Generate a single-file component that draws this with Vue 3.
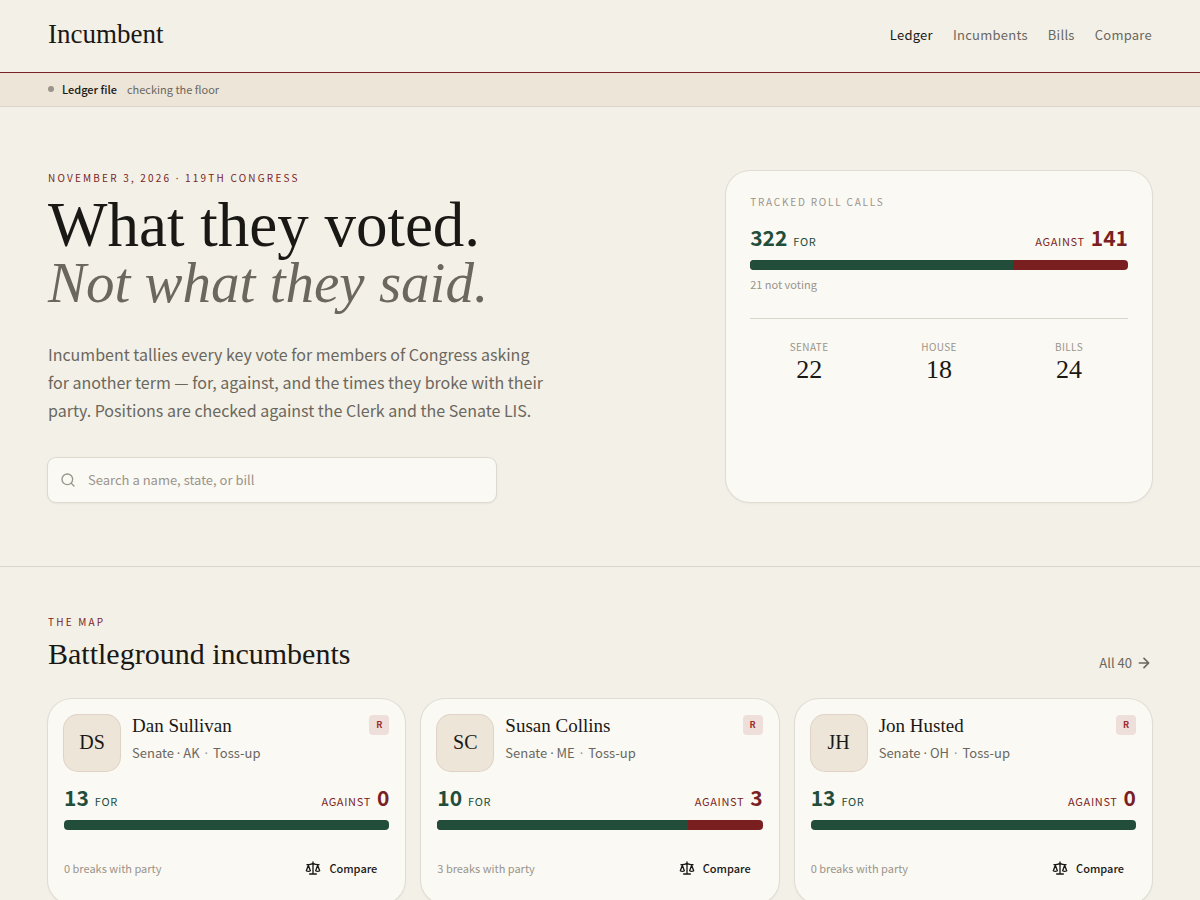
<template>
  <div class="page">
    <header class="header">
      <a class="logo" href="#">Incumbent</a>
      <nav class="nav">
        <a
          v-for="link in links"
          :key="link"
          href="#"
          :class="{ active: link === 'Ledger' }"
          >{{ link }}</a
        >
      </nav>
    </header>

    <div class="status">
      <span class="dot"></span>
      <strong>Ledger file</strong>
      <span>checking the floor</span>
    </div>

    <section class="hero">
      <div class="intro">
        <p class="eyebrow">
          November 3, 2026 <span class="sep">·</span> 119th Congress
        </p>
        <h1>What they voted.<em>Not what they said.</em></h1>
        <p class="lead">
          Incumbent tallies every key vote for members of Congress asking for
          another term — for, against, and the times they broke with their
          party. Positions are checked against the Clerk and the Senate LIS.
        </p>
        <form class="search" @submit.prevent>
          <svg viewBox="0 0 24 24" aria-hidden="true">
            <circle cx="11" cy="11" r="8" />
            <path d="m21 21-4.3-4.3" />
          </svg>
          <input
            v-model="query"
            type="search"
            aria-label="Search a name, state, or bill"
            placeholder="Search a name, state, or bill"
          />
        </form>
      </div>

      <aside class="summary">
        <h2 class="eyebrow faint">Tracked roll calls</h2>
        <div class="tally">
          <span class="for"><b>322</b> For</span>
          <span class="against">Against <b>141</b></span>
        </div>
        <div class="bar">
          <div class="fill" :style="{ width: share(322, 141) }"></div>
        </div>
        <p class="note">21 not voting</p>
        <dl class="stats">
          <div v-for="stat in stats" :key="stat.label">
            <dt>{{ stat.label }}</dt>
            <dd>{{ stat.value }}</dd>
          </div>
        </dl>
      </aside>
    </section>

    <section class="map">
      <div class="map-head">
        <div>
          <p class="eyebrow">The map</p>
          <h2 class="title">Battleground incumbents</h2>
        </div>
        <a class="all" href="#">
          All 40
          <svg viewBox="0 0 24 24" aria-hidden="true">
            <path d="M5 12h14M12 5l7 7-7 7" />
          </svg>
        </a>
      </div>

      <div class="cards">
        <article v-for="person in people" :key="person.name" class="card">
          <div class="card-head">
            <div class="avatar">{{ person.initials }}</div>
            <div class="who">
              <h3>{{ person.name }}</h3>
              <p>
                Senate <span class="sep">·</span> {{ person.state
                }}<span class="sep wide">·</span>Toss-up
              </p>
            </div>
            <span class="party">R</span>
          </div>
          <div class="tally">
            <span class="for"><b>{{ person.yes }}</b> For</span>
            <span class="against">Against <b>{{ person.no }}</b></span>
          </div>
          <div class="bar">
            <div
              class="fill"
              :style="{ width: share(person.yes, person.no) }"
            ></div>
          </div>
          <div class="card-foot">
            <span class="note">{{ person.no }} breaks with party</span>
            <button type="button">
              <svg viewBox="0 0 24 24" aria-hidden="true">
                <path d="m16 16 3-8 3 8c-.9.7-1.9 1-3 1s-2.1-.3-3-1Z" />
                <path d="m2 16 3-8 3 8c-.9.7-1.9 1-3 1s-2.1-.3-3-1Z" />
                <path d="M7 21h10M12 3v18M3 7h2c2 0 5-1 7-2 2 1 5 2 7 2h2" />
              </svg>
              Compare
            </button>
          </div>
        </article>
      </div>
    </section>
  </div>
</template>

<script setup>
import { ref } from "vue";

const query = ref("");

const links = ["Ledger", "Incumbents", "Bills", "Compare"];

const stats = [
  { label: "Senate", value: 22 },
  { label: "House", value: 18 },
  { label: "Bills", value: 24 },
];

const people = [
  { name: "Dan Sullivan", initials: "DS", state: "AK", yes: 13, no: 0 },
  { name: "Susan Collins", initials: "SC", state: "ME", yes: 10, no: 3 },
  { name: "Jon Husted", initials: "JH", state: "OH", yes: 13, no: 0 },
];

const share = (yes, no) => `${(yes / (yes + no)) * 100}%`;
</script>

<style>
body {
  margin: 0;
  background: #f3f0e7;
}
</style>

<style scoped>
.page {
  color: #1a1814;
  font-family: "Noto Sans CJK SC", sans-serif;
  font-size: 13px;
  line-height: 20px;
}
h1,
h2,
h3,
p,
dl,
dd {
  margin: 0;
  font-weight: 400;
}
a {
  color: inherit;
  text-decoration: none;
}
svg {
  fill: none;
  stroke: currentColor;
  stroke-width: 2;
  stroke-linecap: round;
  stroke-linejoin: round;
}
.logo,
h1,
.title,
h3,
.avatar,
dd {
  font-family: "Liberation Serif", serif;
}
.sep {
  font-family: "Noto Sans", sans-serif;
  line-height: 1;
}
.header {
  display: flex;
  align-items: center;
  justify-content: space-between;
  height: 72px;
  padding: 0 48px;
  border-bottom: 1px solid #7a1f24;
}
.logo {
  font-size: 27px;
  line-height: 32px;
  padding-bottom: 4px;
}
.nav {
  display: flex;
  gap: 20px;
  padding-bottom: 2px;
  color: #6b675e;
  letter-spacing: 0.02em;
}
.nav .active {
  color: #1a1814;
}
.status {
  display: flex;
  align-items: center;
  padding: 6px 48px 7px;
  background: #ece5d8;
  border-bottom: 1px solid #d9d5cb;
  color: #6b675e;
  font-size: 11px;
}
.status strong {
  margin: 0 10px 0 8px;
  color: #1a1814;
  font-weight: 500;
}
.dot {
  width: 6px;
  height: 6px;
  border-radius: 50%;
  background: #9a948a;
}
.hero {
  display: grid;
  grid-template-columns: 7fr 5fr;
  gap: 82px;
  padding: 64px 48px;
  border-bottom: 1px solid #d9d5cb;
}
.eyebrow {
  color: #7a1f24;
  font-size: 10px;
  line-height: 14px;
  letter-spacing: 0.22em;
  text-transform: uppercase;
}
.faint {
  color: #9a948a;
  letter-spacing: 0.18em;
}
h1 {
  margin-top: 12px;
  font-size: 63px;
  line-height: 57px;
}
h1 em {
  display: block;
  color: #6b675e;
  font-size: 57px;
}
.lead {
  max-width: 504px;
  margin-top: 29px;
  color: #6b675e;
  font-size: 16px;
  line-height: 28px;
}
.search {
  display: flex;
  align-items: center;
  gap: 12px;
  max-width: 448px;
  height: 44px;
  box-sizing: border-box;
  margin-top: 34px;
  padding: 0 12px;
  border-radius: 8px;
  background: #faf9f4;
  box-shadow: 0 0 0 1px #dcd9cf, 0 1px 3px rgba(26, 24, 20, 0.1);
}
.search svg {
  width: 16px;
  height: 16px;
  color: #9a948a;
}
.search input {
  flex: 1;
  padding: 0;
  border: 0;
  outline: 0;
  background: none;
  color: inherit;
  font: inherit;
}
.search input::placeholder {
  color: #9a948a;
}
.summary,
.card {
  border-radius: 24px;
  background: #faf9f4;
  box-shadow: 0 0 0 1px #dfdcd3, 0 1px 3px rgba(26, 24, 20, 0.08);
}
.summary {
  padding: 24px;
}
.tally {
  display: flex;
  justify-content: space-between;
  font-size: 11px;
  line-height: 24px;
  letter-spacing: 0.06em;
  text-transform: uppercase;
}
.tally span {
  display: flex;
  align-items: baseline;
  gap: 6px;
}
.tally b {
  font-size: 21px;
  letter-spacing: 0;
}
.summary .tally {
  margin-top: 16px;
}
.for {
  color: #234d3b;
}
.against {
  color: #7a1f24;
}
.bar {
  height: 10px;
  margin-top: 7px;
  overflow: hidden;
  border-radius: 4px;
  background: #7a1f20;
}
.fill {
  height: 100%;
  background: #234d3b;
}
.note {
  color: #9a948a;
  font-size: 11px;
}
.summary .note {
  margin-top: 4px;
}
.stats {
  display: grid;
  grid-template-columns: repeat(3, 1fr);
  gap: 12px;
  margin-top: 24px;
  padding-top: 20px;
  border-top: 1px solid #d9d5cb;
  text-align: center;
}
dt {
  color: #9a948a;
  font-size: 10px;
  line-height: 16px;
  letter-spacing: 0.04em;
  text-transform: uppercase;
}
dd {
  font-size: 26px;
  line-height: 30px;
}
.map {
  padding: 48px;
}
.map-head {
  display: flex;
  align-items: flex-end;
  justify-content: space-between;
}
.title {
  margin-top: 6px;
  font-size: 30px;
  line-height: 38px;
}
.all {
  display: flex;
  align-items: center;
  gap: 4px;
  color: #6b675e;
}
.all svg {
  width: 16px;
  height: 16px;
  stroke-width: 2.5;
}
.cards {
  display: grid;
  grid-template-columns: repeat(3, 1fr);
  gap: 16px;
  margin-top: 26px;
}
.card {
  padding: 16px;
}
.card-head {
  display: flex;
  gap: 12px;
}
.avatar {
  width: 56px;
  height: 56px;
  border-radius: 14px;
  background: #ece5d8;
  box-shadow: 0 0 0 1px #e0d2c6;
  font-size: 20px;
  line-height: 54px;
  text-align: center;
}
.who {
  flex: 1;
  color: #6b675e;
}
h3 {
  color: #1a1814;
  font-size: 19px;
  line-height: 22px;
}
.who p {
  margin-top: 6px;
}
.who .wide {
  margin: 0 5px;
  color: #9a948a;
}
.party {
  width: 20px;
  height: 20px;
  border-radius: 4px;
  background: #efdfdb;
  color: #9b2c2c;
  font-size: 9px;
  font-weight: 700;
  text-align: center;
}
.card .tally {
  margin-top: 14px;
}
.card-foot {
  display: flex;
  align-items: center;
  justify-content: space-between;
  margin-top: 18px;
}
button {
  display: flex;
  align-items: center;
  gap: 8px;
  height: 40px;
  padding: 0 12px;
  border: 0;
  background: none;
  color: #1a1814;
  font: inherit;
  font-size: 11px;
  font-weight: 500;
  cursor: pointer;
}
button svg {
  width: 16px;
  height: 16px;
}
</style>
